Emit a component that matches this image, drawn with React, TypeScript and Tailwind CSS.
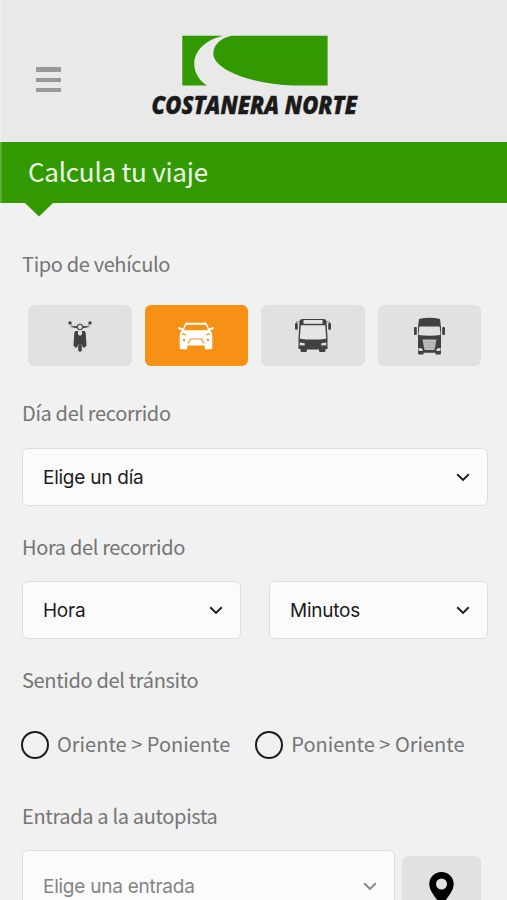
import type { ReactNode } from "react";

const Logo = () => (
  <svg width="214" height="90" viewBox="148 34 214 90" className="block overflow-visible">
    <path
      fill="#339900"
      d="M182.3 35.8H223.500C206 39.5 194.300 50.500 194.300 64C194.300 73 199 80 207 85.600H182.300Z"
    />
    <path
      fill="#339900"
      d="M231.500 35.800H327.600V85.600H294C249 84 213.300 69 213.300 53.500C213.300 46 219.500 38.500 231.500 35.800Z"
    />
    <text
      x="151.500"
      y="114.200"
      fontSize="24"
      fontStyle="italic"
      fontWeight="800"
      fill="#1a1a1a"
      stroke="#1a1a1a"
      strokeWidth="0.400"
      textLength="205.500"
      lengthAdjust="spacingAndGlyphs"
      className="font-['Open_Sans',sans-serif]"
    >
      COSTANERA NORTE
    </text>
  </svg>
);

const ScooterIcon = () => (
  <svg width="24" height="32" viewBox="0 0 24 32" fill="#414141">
    <circle cx="2" cy="3" r="1.700" />
    <circle cx="22" cy="3" r="1.700" />
    <path d="M1.500 6.500 9 6v2L6 7.800ZM22.500 6.500 15 6v2l3-.2Z" />
    <path d="M2.500 3.500 5 6.500M21.500 3.500 19 6.500" stroke="#8a8a8a" strokeWidth=".6" />
    <circle cx="12" cy="7" r="2.700" fill="#e4e4e4" stroke="#555" strokeWidth="1.200" />
    <path d="M8 11h2v2.500c0 2.800 4 2.800 4 0V11h2c1 0 1.600 1 1.700 2l.8 12.500-1.500 2h-2.200c0-4.700-5.600-4.700-5.600 0H7l-1.500-2L6.300 13c.1-1 .7-2 1.700-2Z" />
    <rect x="10.200" y="24" width="3.600" height="7.800" rx="1.700" />
  </svg>
);

const CarIcon = () => (
  <svg width="36" height="29" viewBox="0 0 36 29" fill="#fff">
    <path
      fillRule="evenodd"
      d="M8 2 8.500 1l2 .8h15l2-.8.5 1c1 .8 2 3 2.800 5.200L35.500 6c.5 1.700 0 2.700-3.300 3.200l1.500 2.300c.5 1 .6 2.500.6 4.500V27c0 .8-.6 1.200-1.300 1.200h-5c-.8 0-1.300-.5-1.300-1.300V24.500H9.300v2.400c0 .8-.5 1.300-1.300 1.300H3c-.8 0-1.300-.4-1.300-1.200V16c0-2 .1-3.500.6-4.500l1.500-2.300C.5 8.700 0 7.700.5 6l4.700 1.200C6 5 7 2.800 8 2ZM8.800 3.800C7.500 5 6.700 7 6.200 9.300h23.600c-.5-2.300-1.300-4.300-2.600-5.500ZM3.800 12l1 2 4 .5c-.5-1.200-2.500-2-5-2.500ZM32.200 12c-2.500.5-4.500 1.300-5 2.500l4-.5Z"
    />
    <path d="M10 22.500 12.500 18h11l2.500 4.500" fill="none" stroke="#f79116" strokeWidth="1.100" />
    <circle cx="6" cy="19" r="1.200" fill="#f79116" />
    <circle cx="30" cy="19" r="1.200" fill="#f79116" />
  </svg>
);

const BusIcon = () => (
  <svg width="36" height="35" viewBox="0 0 36 35" fill="#414141">
    <rect x="0" y="5" width="2.800" height="6.800" rx="1" />
    <rect x="33.200" y="5" width="2.800" height="6.800" rx="1" />
    <path d="M1.500 5V3.800H4M34.500 5V3.800H32" fill="none" stroke="#888" />
    <path d="M4.500 3Q5 1 7.500 1h21Q31 1 31.500 3L32.500 20V31h-2v1.500q0 1.500-1.500 1.500h-3.500q-1.500 0-1.500-1.500V31.500H12v1q0 1.500-1.500 1.500H7q-1.500 0-1.500-1.500V31h-2V20Z" />
    <rect x="8.500" y="2" width="19" height="3.800" fill="#e4e4e4" />
    <path d="M5.800 7.200h24.400l1 13.500Q18 22.500 4.800 20.700Z" fill="#e5e5e5" />
    <path d="M4.700 24.500l5 .7v2.300l-5-.3ZM31.300 24.500l-5 .7v2.300l5-.3Z" fill="#e1e1e1" />
  </svg>
);

const TruckIcon = () => (
  <svg width="31" height="38" viewBox="0 0 31 38" fill="#414141">
    <rect x="0" y="10" width="2.800" height="8" rx="1" />
    <rect x="28.200" y="10" width="2.800" height="8" rx="1" />
    <path d="M5 2Q15.500-.5 26 2L27 10v26.500q0 1-1 1h-4.500V35.800h-12v1.700H5q-1 0-1-1V10Z" />
    <path d="M5.300 9.500h20.400l.8 8.500Q15.500 19.500 4.500 18Z" fill="#e1e1e1" />
    <path d="M8.500 22.500h14l-2 10.500h-10Z" fill="#bdbdbd" />
    <path d="M9 25.500h13M9.500 28h12M10 30.500h11" stroke="#a8a8a8" strokeWidth=".7" />
    <path d="M4.500 31l3.500.5.800 2.500-4.300-.2ZM26.500 31l-3.500.5-.8 2.500 4.300-.2Z" fill="#e1e1e1" />
  </svg>
);

const Chevron = () => (
  <svg width="14" height="9" viewBox="0 0 14 9" fill="none" stroke="currentColor" strokeWidth="1.900">
    <path d="M1.200 1.300 7 7l5.800-5.700" />
  </svg>
);

const PinIcon = () => (
  <svg width="25" height="35" viewBox="0 0 25 35">
    <path
      fillRule="evenodd"
      d="M12.500 0C5.600 0 .3 5.300.3 12c0 8 7.700 14 12.200 23C17 26 24.700 20 24.700 12 24.700 5.300 19.400 0 12.500 0Zm0 6.500a5.500 5.500 0 1 1 0 11 5.500 5.500 0 0 1 0-11Z"
    />
  </svg>
);

const Label = ({ children }: { children: ReactNode }) => (
  <h2 className="h-8 text-[20px] leading-[30px] tracking-[-0.35px] text-[#757575] whitespace-nowrap">
    {children}
  </h2>
);

const Select = ({ text, className = "" }: { text: string; className?: string }) => (
  <button
    className={`flex h-[58px] items-center justify-between rounded-md border border-[#dedede] bg-[#fbfbfb] pl-5 pr-[17px] font-['Inter',sans-serif] text-[19px] tracking-[-0.25px] ${className}`}
  >
    <span className="pt-0.5">{text}</span>
    <Chevron />
  </button>
);

const Radio = ({ text }: { text: string }) => (
  <label className="flex items-center gap-2 text-[20px] text-[#757575] whitespace-nowrap">
    <span className="size-7 shrink-0 rounded-full border-2 border-[#1c1c1c]" />
    <span className="-mt-0.5">{text}</span>
  </label>
);

const vehicles = [
  { name: "moto", icon: <ScooterIcon /> },
  { name: "auto", icon: <CarIcon />, active: true },
  { name: "bus", icon: <BusIcon /> },
  { name: "camion", icon: <TruckIcon /> },
];

const App = () => {
  return (
    <div className="relative h-[900px] overflow-hidden bg-[#f1f1f1] font-['Noto_Sans_CJK_JP',sans-serif]">
      <div className="absolute inset-y-0 left-0 z-10 w-0.5 bg-white/20" />

      {/* Header */}
      <header className="flex h-[142px] items-start bg-[#e9e9e9]">
        <button className="ml-9 mt-[67px] flex w-[25px] flex-col gap-1.5">
          <span className="h-[4.500px] bg-[#999999]" />
          <span className="h-1 bg-[#999999]" />
          <span className="h-1 bg-[#999999]" />
        </button>
        <div className="ml-[87px] mt-[34px]">
          <Logo />
        </div>
      </header>

      {/* Title */}
      <div className="relative flex h-[61px] items-center bg-[#339900] pl-7">
        <h1 className="-mt-[3px] text-[26px] leading-none tracking-[-0.25px] text-[#effbe9] whitespace-nowrap">
          Calcula tu viaje
        </h1>
        <svg className="absolute left-[25px] top-full" width="28" height="14" viewBox="0 0 28 14">
          <path fill="#339900" d="M0 0h28L14 13.500Z" />
        </svg>
      </div>

      <main className="pl-[22px] pr-[19px] pt-[46px]">
        <Label>Tipo de vehículo</Label>
        <div className="ml-1.5 mr-[7px] mt-6 grid grid-cols-4 gap-[13px]">
          {vehicles.map((v) => (
            <button
              key={v.name}
              className={`flex h-[61px] items-center justify-center rounded-md ${
                v.active ? "bg-[#f79116]" : "bg-[#e1e1e1]"
              }`}
            >
              {v.icon}
            </button>
          ))}
        </div>

        <div className="mt-8">
          <Label>Día del recorrido</Label>
          <Select text="Elige un día" className="mt-[18px] w-full text-[#1c1c1c]" />
        </div>

        <div className="mt-[26px]">
          <Label>Hora del recorrido</Label>
          <div className="mt-[17px] grid grid-cols-2 gap-7">
            <Select text="Hora" className="text-[#1c1c1c]" />
            <Select text="Minutos" className="text-[#1c1c1c]" />
          </div>
        </div>

        <div className="mt-[26px]">
          <Label>Sentido del tránsito</Label>
          <div className="-ml-px mt-[34px] flex h-7 items-center gap-[25px]">
            <Radio text="Oriente > Poniente" />
            <Radio text="Poniente > Oriente" />
          </div>
        </div>

        <div className="mt-[42px]">
          <Label>Entrada a la autopista</Label>
          <div className="mt-[17px] flex gap-[7px]">
            <Select text="Elige una entrada" className="h-[72px] w-[373px] text-[#858585]" />
            <button className="mt-1.5 flex h-[61px] w-[79px] justify-center rounded-md bg-[#e1e1e1] pt-4">
              <PinIcon />
            </button>
          </div>
        </div>
      </main>
    </div>
  );
};

export default App;
